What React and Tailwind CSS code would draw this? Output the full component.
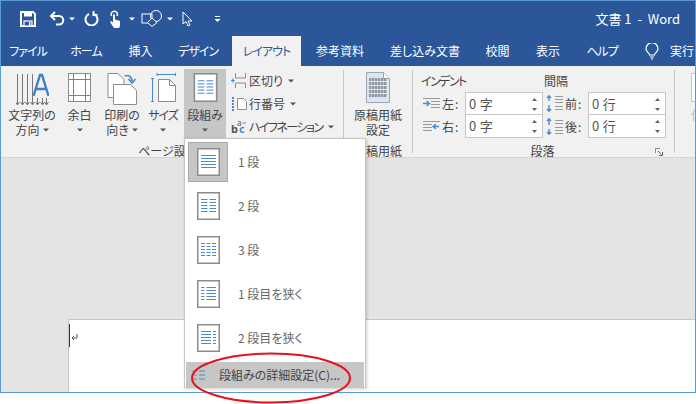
import React from "react";

const Caret = ({ c = "#555", cls = "" }) => (
  <svg width="6" height="4" viewBox="0 0 6 4" className={cls}><polygon points="0,0.5 6,0.5 3,3.5" fill={c} /></svg>
);

const BLUE = "#4a8ad0";
const GRAY = "#8c8c8c";

const Save = () => (
  <svg width="16" height="16" viewBox="0 0 16 16" fill="none">
    <path d="M1 1h12l2 2v12H1z" stroke="#fff" strokeWidth="2" />
    <rect x="4" y="1" width="8" height="4.5" fill="#fff" />
    <rect x="4" y="10" width="8" height="5" fill="#2b579a" stroke="#fff" strokeWidth="1.2" />
    <rect x="9" y="11" width="1.5" height="4" fill="#fff" />
  </svg>
);
const Undo = () => (
  <svg width="16" height="15" viewBox="0 0 16 15" fill="none" stroke="#fff" strokeWidth="2">
    <path d="M6 1 2 5l4 4" />
    <path d="M2 5h8a4 4 0 0 1 0 8.5H7" />
  </svg>
);
const Redo = () => (
  <svg width="15" height="15" viewBox="0 0 15 15" fill="none" stroke="#fff" strokeWidth="2">
    <path d="M5 3a6 6 0 1 0 5 0" />
    <path d="M9.5 0v4h4" />
  </svg>
);
const Touch = () => (
  <svg width="13" height="18" viewBox="0 0 13 18" fill="none">
    <path d="M2.5 6a3.2 3.2 0 1 1 5.6 0" stroke="#fff" strokeWidth="1.5" />
    <path d="M4 4.5h2v5l5 1.500v5l-1 2H5L1 12l1-1 2 1.500z" fill="#fff" />
  </svg>
);
const Shapes = () => (
  <svg width="24" height="17" viewBox="0 0 24 17" fill="none" stroke="#fff" strokeWidth="1">
    <rect x="1" y="4" width="10" height="9" />
    <circle cx="15" cy="6" r="5.5" />
    <path d="M11 8l5 4.5-5 4-4.5-4z" fill="#2b579a" />
  </svg>
);
const Cursor = () => (
  <svg width="11" height="16" viewBox="0 0 11 16" fill="none" stroke="#fff" strokeWidth="1">
    <path d="M1 1v12l3-2.5 2 4.5 2-1-2-4h4z" />
  </svg>
);
const Customize = () => (
  <svg width="7" height="7" viewBox="0 0 7 7"><rect x="1" y="1" width="5" height="1" fill="#fff" /><polygon points="0.5,4 6.5,4 3.5,7" fill="#fff" /></svg>
);
const Bulb = () => (
  <svg width="14" height="17" viewBox="0 0 14 17" fill="none" stroke="#fff" strokeWidth="1.2">
    <path d="M4.5 12c0-2-3.5-3-3.5-6.3a6 6 0 0 1 12 0C13 9 9.500 10 9.500 12z" />
    <path d="M5 14h4M6 16h2" />
  </svg>
);

const TextDir = () => (
  <svg width="33" height="34" viewBox="0 0 33 34" fill="none">
    {[1, 6, 11, 16].map((x) => (
      <g key={x} stroke="#777" strokeWidth="1"><path d={`M${x + 0.5} 1v30`} /><path d={`M${x - 1.5} 29l2 3 2-3`} /></g>
    ))}
    {[21, 26, 30].map((x) => (
      <g key={x} stroke="#777" strokeWidth="1"><path d={`M${x + 0.5} 25v6`} /><path d={`M${x - 1.5} 29l2 3 2-3`} /></g>
    ))}
    <path d="M17.500 23 24 2h2l6.500 21M20 16h10" stroke="#3f7fc4" strokeWidth="2.4" />
  </svg>
);
const Margins = () => (
  <svg width="23" height="29" viewBox="0 0 23 29" fill="#fff">
    <rect x="0.500" y="0.500" width="22" height="28" stroke={GRAY} />
    <path d="M5.500 1v27M17.500 1v27M1 6.500h21M1 22.500h21" stroke={BLUE} fill="none" />
  </svg>
);
const Orientation = () => (
  <svg width="31" height="32" viewBox="0 0 31 32" fill="#fff" stroke={GRAY}>
    <path d="M1 .5h10l6 6v18H1z" />
    <path d="M6.500 11.500h17l6 6v14h-23z" />
    <path d="M17.500 3c4-1.500 7 .5 7.500 5" stroke={BLUE} strokeWidth="1.700" fill="none" />
    <path d="M21.500 6l3.500 4 3.500-4" stroke={BLUE} strokeWidth="1.700" fill="none" />
  </svg>
);
const SizeIcon = () => (
  <svg width="25" height="30" viewBox="0 0 25 30" fill="none">
    <path d="M1.500 5v24M0 5.500h3M0 28.500h3" stroke={BLUE} />
    <path d="M6 1.500h19M6 0v3M24.500 0v3" stroke={BLUE} />
    <path d="M7.500 6.500h11l6 6v16h-17z" fill="#fff" stroke={GRAY} />
    <path d="M18.500 6.500v6h6" stroke={GRAY} />
  </svg>
);

const Col = ({ kind, w = 23, h = 28 }) => {
  const cols = { 1: [[4, 19]], 2: [[4, 10.5], [12.5, 19]], 3: [[4, 8], [9.5, 13.5], [15, 19]], l: [[4, 7.5], [9.5, 19]], r: [[4, 14], [16, 19]] }[kind];
  return (
    <svg width={w} height={h} viewBox="0 0 23 28">
      <rect x="0.750" y="0.750" width="21.500" height="26.500" fill="#fff" stroke={GRAY} strokeWidth="1.500" />
      {[7.5, 10.5, 13.5, 16.5, 19.5].map((y) =>
        cols.map(([a, b]) => <path key={`${y}-${a}`} d={`M${a} ${y}H${b}`} stroke={BLUE} strokeWidth="1" />)
      )}
    </svg>
  );
};

const Breaks = () => (
  <svg width="16" height="15" viewBox="0 0 16 15" fill="none">
    <path d="M4.500 0v5h10V0M4.500 15v-5h10v5" stroke={GRAY} />
    <path d="M0 7.500h3M1 5.500l2.500 2-2.500 2" stroke={BLUE} />
  </svg>
);
const LineNums = () => (
  <svg width="16" height="16" viewBox="0 0 16 16" fill="none">
    <path d="M2 1v14" stroke={BLUE} strokeWidth="2" strokeDasharray="2 1" />
    <path d="M6.500 2.500h6l3 3v8h-9z" fill="#fff" stroke={GRAY} />
  </svg>
);
const Hyphen = () => (
  <svg width="17" height="15" viewBox="0 0 17 15">
    <text x="0" y="14" fontSize="11" fontWeight="700" fill="#555" fontFamily="Noto Sans, sans-serif">b</text>
    <text x="8" y="14" fontSize="11" fontWeight="700" fill={BLUE} fontFamily="Noto Sans, sans-serif">c</text>
    <text x="6" y="7" fontSize="8" fill="#555" fontFamily="Noto Sans, sans-serif">a</text>
    <path d="M11.500 4h3.500" stroke={BLUE} />
  </svg>
);
const Genko = () => (
  <svg width="24" height="31" viewBox="0 0 24 31">
    <path d="M.500 .5h17l6 6v24H.500z" fill="#dce6f0" stroke="#9aa7b4" />
    <path d="M17.500 .5v6h6" fill="#fff" stroke="#9aa7b4" />
    {[6, 10, 14, 18, 22].map((y) =>
      [3, 6, 9, 12, 15, 18].map((x) => <rect key={`${x}-${y}`} x={x} y={y} width="2.400" height="3" fill="#8f979f" />)
    )}
  </svg>
);
const IndentIcon = ({ mirror }) => (
  <svg width="17" height="11" viewBox="0 0 17 11" className="shrink-0" style={mirror ? { transform: "scaleX(-1)" } : undefined}>
    <path d="M0 .5h17" stroke="#999" />
    <path d="M8 3.500h9M8 6.500h9M8 9.500h9" stroke="#999" />
    <path d={mirror ? "M1 5.500h6M4 3l3 2.500L4 8" : "M0 5.500h6M3.500 3l3 2.500L3.500 8"} stroke={BLUE} strokeWidth="1.400" fill="none" />
  </svg>
);
const SpaceIcon = ({ flip }) => (
  <svg width="17" height="17" viewBox="0 0 17 17" className="shrink-0" style={flip ? { transform: "scaleY(-1)" } : undefined}>
    <path d="M3 1v5M1 3l2-2.200L5 3M3 10v6M1 14l2 2.200L5 14" stroke={BLUE} strokeWidth="1.400" fill="none" />
    <path d="M9 1.500h8M9 4.500h8M9 7.500h8M9 11.500h8M9 14.500h8" stroke="#999" />
  </svg>
);
const Launcher = () => (
  <svg width="8" height="8" viewBox="0 0 8 8" fill="none">
    <path d="M.500 5V.500H5" stroke="#888" />
    <path d="M3 3l3.500 3.500M4 7.500h3.500V4" stroke="#666" />
  </svg>
);

const Spin = ({ value, second }) => (
  <div className={`w-[78px] shrink-0 h-[24px] bg-white border border-[#c6c6c6] flex items-center justify-between pl-[3px] pr-[5px] text-[#555] text-[13px] tracking-[0.3px] ${second ? "-mt-px" : ""}`}>
    <span>{value}</span>
    <span className="flex flex-col gap-[7px]">
      <svg width="5" height="3" viewBox="0 0 5 3" className="block"><polygon points="0,3 5,3 2.500,0" fill="#666" /></svg>
      <svg width="5" height="3" viewBox="0 0 5 3" className="block"><polygon points="0,0 5,0 2.500,3" fill="#666" /></svg>
    </span>
  </div>
);

const RibbonBtn = ({ icon, l1, l2, w, active, tight }) => (
  <div className={`${w} h-[69px] flex flex-col items-center ${active ? "bg-[#c6c6c6]" : ""}`}>
    <div className="h-[38px] flex items-start justify-center pt-[4px]">{icon}</div>
    <div className={`leading-[15px] h-[15px] whitespace-nowrap ${tight ? "tracking-[-1px]" : ""}`}>{l1}</div>
    <div className="leading-[15px] h-[15px] whitespace-nowrap flex items-center gap-[3px] justify-center">
      {l2 && <span>{l2}</span>}
      <Caret />
    </div>
  </div>
);

const Tab = ({ w, active, tight, children }) => (
  <div className={`${w} shrink-0 flex items-center justify-center whitespace-nowrap ${tight ? "tracking-[-1px]" : ""} ${active ? "bg-[#f1f1f1] text-[#2b579a]" : "text-white"}`}>
    {children}
  </div>
);

const SmallRow = ({ icon, text, tight }) => (
  <div className="h-[23px] flex items-center">
    <span className="w-[20px] pl-[2px] flex items-center">{icon}</span>
    <span className={`whitespace-nowrap ${tight ? "tracking-[-1.5px]" : ""}`}>{text}</span>
    <Caret cls="ml-[5px]" />
  </div>
);

const Sep = () => <div className="w-px shrink-0 my-[4px] bg-[#c6c6c6]" />;

const MenuItem = ({ kind, label, active }) => (
  <div className="h-[44px] shrink-0 flex items-center pl-[3px]">
    <div className={`w-[40px] h-[40px] flex items-center justify-center ${active ? "bg-[#c6c6c6] border border-[#aaa]" : ""}`}>
      <Col kind={kind} />
    </div>
    <span className="ml-[10px] text-[#666] text-[12px]">{label}</span>
  </div>
);

export default function App() {
  return (
    <div className="relative w-[696px] h-[404px] overflow-hidden bg-white text-[12px] text-[#444] font-['Noto_Sans_CJK_JP',sans-serif] [font-feature-settings:'palt']">
      <div className="h-[393px] border border-[#5b9bd5] flex flex-col overflow-hidden">
        <div className="h-[35px] shrink-0 bg-[#2b579a] flex items-center pl-[19px] text-white">
          <Save />
          <span className="ml-[13px]"><Undo /></span>
          <Caret c="#fff" cls="ml-[4px]" />
          <span className="ml-[9px]"><Redo /></span>
          <span className="ml-[10px]"><Touch /></span>
          <Caret c="#fff" cls="ml-[7px]" />
          <span className="ml-[6px]"><Shapes /></span>
          <Caret c="#fff" cls="ml-[2px]" />
          <span className="ml-[9px]"><Cursor /></span>
          <span className="ml-[21px]"><Customize /></span>
          <span className="ml-auto mr-[15px] text-[13px] whitespace-pre">文書 1  -  Word</span>
        </div>
        <div className="h-[30px] shrink-0 bg-[#2b579a] flex items-stretch">
          <Tab w="w-[54px]" tight>ファイル</Tab>
          <Tab w="w-[62px]" tight>ホーム</Tab>
          <Tab w="w-[47px]">挿入</Tab>
          <Tab w="w-[68px]" tight>デザイン</Tab>
          <Tab w="w-[69px]" active tight>レイアウト</Tab>
          <Tab w="w-[78px]">参考資料</Tab>
          <Tab w="w-[92px]">差し込み文書</Tab>
          <Tab w="w-[53px]">校閲</Tab>
          <Tab w="w-[48px]">表示</Tab>
          <Tab w="w-[60px]" tight>ヘルプ</Tab>
          <div className="flex items-center ml-[13px] text-white whitespace-nowrap">
            <Bulb />
            <span className="ml-[11px]">実行したい</span>
          </div>
        </div>
        <div className="h-[92px] shrink-0 bg-[#f1f1f1] border-b border-[#d4d4d4] flex items-stretch">
          <div className="w-[342px] shrink-0 flex flex-col">
            <div className="flex shrink-0 pt-[3px] pl-[3px]">
              <RibbonBtn w="w-[56px]" icon={<TextDir />} l1="文字列の" l2="方向" />
              <RibbonBtn w="w-[39px]" icon={<Margins />} l1="余白" />
              <RibbonBtn w="w-[46px]" icon={<Orientation />} l1="印刷の" l2="向き" />
              <RibbonBtn w="w-[36px]" icon={<SizeIcon />} l1="サイズ" tight />
              <div className="w-[3px]" />
              <RibbonBtn w="w-[42px]" active icon={<Col kind={2} w={25} h={29} />} l1="段組み" />
              <div className="pl-[3px]">
                <SmallRow icon={<Breaks />} text="区切り" />
                <SmallRow icon={<LineNums />} text="行番号" />
                <SmallRow icon={<Hyphen />} text="ハイフネーション" tight />
              </div>
            </div>
            <div className="h-[19px] leading-[26px] text-center pr-[8px] whitespace-nowrap">ページ設定</div>
          </div>
          <Sep />
          <div className="w-[68px] shrink-0 flex flex-col items-center">
            <div className="h-[72px] shrink-0 flex flex-col items-center pt-[6px]">
              <div className="h-[35px]"><Genko /></div>
              <div className="leading-[15px]">原稿用紙</div>
              <div className="leading-[15px]">設定</div>
            </div>
            <div className="h-[19px] leading-[26px] whitespace-nowrap">原稿用紙</div>
          </div>
          <Sep />
          <div className="w-[261px] shrink-0 flex flex-col pt-[4px]">
            <div className="h-[22px] shrink-0 flex items-center pl-[8px]">
              <span className="w-[123px] tracking-[-1.5px]">インデント</span>
              <span>間隔</span>
            </div>
            <div className="flex shrink-0 pl-[10px] h-[23px]">
              <div className="w-[42px] flex items-center gap-[2px]"><IndentIcon /><span className="tracking-[1px] whitespace-nowrap">左:</span></div>
              <Spin value="0 字" />
              <div className="w-[45px] flex items-center gap-[2px] pl-[3px]"><SpaceIcon /><span className="tracking-[1px] whitespace-nowrap">前:</span></div>
              <Spin value="0 行" />
            </div>
            <div className="flex shrink-0 pl-[10px] h-[23px]">
              <div className="w-[42px] flex items-center gap-[2px]"><IndentIcon mirror /><span className="tracking-[1px] whitespace-nowrap">右:</span></div>
              <Spin value="0 字" second />
              <div className="w-[45px] flex items-center gap-[2px] pl-[3px]"><SpaceIcon flip /><span className="tracking-[1px] whitespace-nowrap">後:</span></div>
              <Spin value="0 行" second />
            </div>
            <div className="relative h-[19px] leading-[26px] text-center pr-[2px]">
              段落
              <span className="absolute right-[11px] top-[10px] leading-none"><Launcher /></span>
            </div>
          </div>
          <Sep />
          <div className="flex-1 pl-[16px] pt-[7px] overflow-hidden">
            <div className="w-[12px] h-[29px] bg-white border border-[#c6c6c6]" />
            <div className="text-[#bbb] mt-[4px]">位</div>
          </div>
        </div>
        <div className="flex-1 bg-[#e4e4e4] pt-[161px] pl-[67px] flex flex-col">
          <div className="flex-1 bg-white border-t border-l border-[#c6c6c6] pt-[4px] flex items-start">
            <div className="w-[1px] h-[23px] bg-[#333]" />
            <svg width="7" height="7" viewBox="0 0 7 7" fill="none" stroke="#555" className="mt-[10px] ml-[1px]">
              <path d="M6 0v4H1M3 2 1 4l2 2" />
            </svg>
          </div>
        </div>
      </div>

      {/* dropdown menu */}
      <div className="absolute left-[184px] top-[138px] w-[182px] h-[250px] bg-white border border-[#c6c6c6] shadow-[1px_1px_3px_rgba(0,0,0,0.2)] pt-[1px] flex flex-col">
        <MenuItem kind={1} label="1 段" active />
        <MenuItem kind={2} label="2 段" />
        <MenuItem kind={3} label="3 段" />
        <MenuItem kind="l" label="1 段目を狭く" />
        <MenuItem kind="r" label="2 段目を狭く" />
        <div className="h-[2px] shrink-0" />
        <div className="flex-1 bg-[#c6c6c6] flex items-center pl-[6px] mx-px">
          <svg width="13" height="10" viewBox="0 0 13 10" fill="none">
            <path d="M0 1h5M0 5h5M0 9h5" stroke="#888" />
            <path d="M7 1h6M7 5h6M7 9h6" stroke={BLUE} />
          </svg>
          <span className="ml-[14px] text-[#444] whitespace-nowrap">段組みの詳細設定(C)...</span>
        </div>
      </div>

      {/* red annotation */}
      <svg width="164" height="54" viewBox="0 0 164 54" fill="none" className="absolute left-[190px] top-[351px]">
        <ellipse cx="81" cy="27" rx="79" ry="24.500" stroke="#e8101a" strokeWidth="2" />
      </svg>
    </div>
  );
}
